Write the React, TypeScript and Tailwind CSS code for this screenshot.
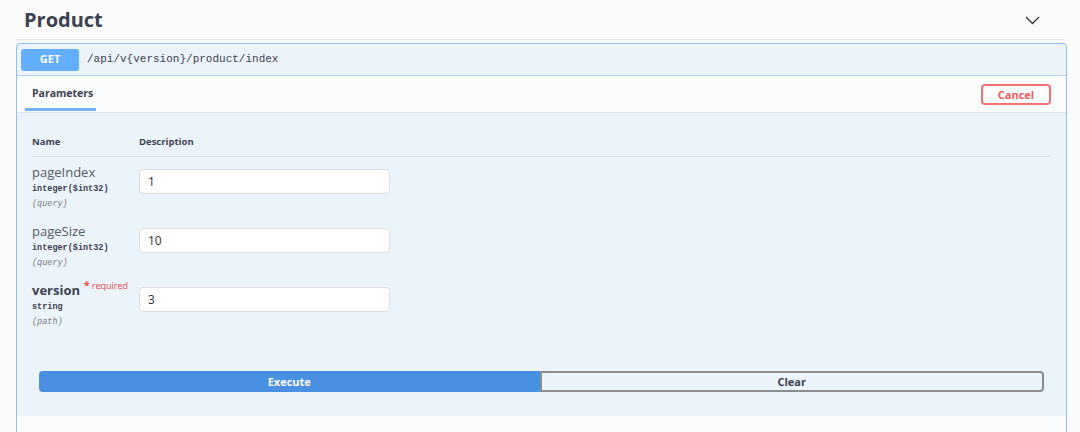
import React from "react";

/**
 * Swagger-style operation block: GET /api/v{version}/product/index, "Try it out" open.
 */

type Param = {
  name: string;
  type: string;
  where: string;
  value: string;
  required?: boolean;
};

const params: Param[] = [
  { name: "pageIndex", type: "integer($int32)", where: "(query)", value: "1" },
  { name: "pageSize", type: "integer($int32)", where: "(query)", value: "10" },
  { name: "version", type: "string", where: "(path)", value: "3", required: true },
];

const sans = "font-['Open_Sans','Noto_Sans',sans-serif]";
const mono = "font-['Liberation_Mono','DejaVu_Sans_Mono',monospace]";

export default function App() {
  return (
    <div className={`w-[1080px] h-[432px] overflow-hidden bg-[#fafafa] px-4 text-[#3b4151] ${sans}`}>
      <div className="flex items-center justify-between h-[40px] pl-2 pr-[24px] border-b border-[#e3e4e6]">
        <h2 className="text-[20px] font-bold leading-none">Product</h2>
        <svg width="15" height="9" viewBox="0 0 15 9" className="mt-[1px]">
          <path d="M1 1 L7.5 7.5 L14 1" fill="none" stroke="#3b3b3b" strokeWidth="1.4" />
        </svg>
      </div>

      <div className="mt-[3px] w-[1051px] border border-[#8dbff4] rounded-[4px] bg-[#ebf3fb] overflow-hidden">
        {/* summary */}
        <div className="flex items-center h-[32px] px-[4px] border-b border-[#b2d2f6]">
          <span className="w-[58px] h-[22px] rounded-[3px] bg-[#61affe] text-white text-[11px] font-bold flex items-center justify-center">
            GET
          </span>
          <span className={`ml-[8px] text-[11px] ${mono}`}>/api/v{"{version}"}/product/index</span>
        </div>

        {/* tab header */}
        <div className="flex items-center justify-between h-[37px] bg-[#fbfcfe] border-b border-[#dfe6ee] pl-[8px] pr-[15px]">
          <div className="relative h-full flex items-center px-[7px]">
            <span className="text-[10.5px] font-bold">Parameters</span>
            <span className="absolute left-0 w-[71px] bottom-[1px] h-[3px] bg-[#6fb3f8]" />
          </div>
          <button className="w-[70px] h-[21px] rounded-[4px] border-2 border-[#f47272] text-[#f05a5a] text-[11px] font-bold leading-none">
            Cancel
          </button>
        </div>

        {/* parameters */}
        <div className="pt-[22px] pb-[24px]">
          <div className="mx-[15px] flex border-b border-[#d6dde6] pb-[7px] text-[9.5px] font-bold leading-[14px]">
            <div className="w-[107px]">Name</div>
            <div>Description</div>
          </div>
          <div className="mt-[7px]">
            {params.map((p) => (
              <ParamRow key={p.name} p={p} />
            ))}
          </div>
          <div className="mx-[22px] mt-[30px] flex h-[21px]">
            <button className="flex-1 rounded-l-[4px] bg-[#4990e2] text-white text-[11px] font-bold leading-none">
              Execute
            </button>
            <button className="flex-1 rounded-r-[4px] border-2 border-[#8a8d91] text-[#3b4151] text-[11px] font-bold leading-none">
              Clear
            </button>
          </div>
        </div>

        {/* responses */}
        <div className="bg-[#fbfcfe] h-[40px] pl-[15px] pt-[8px]">
          <span className="text-[14px] font-bold leading-[16px]">Responses</span>
        </div>
      </div>
    </div>
  );
}

function ParamRow({ p }: { p: Param }) {
  return (
    <div className="flex h-[59px] mx-[15px]">
      <div className="w-[107px]">
        <div className="flex items-start leading-[16px]">
          <span className={p.required ? "text-[13px] font-bold" : "text-[13px] text-[#555b66]"}>{p.name}</span>
          {p.required && (
            <span className="ml-[4px] -mt-[4px] text-[9px] text-[#f04848] leading-[14px]">
              <span className="text-[10px] font-bold">*</span>&nbsp;required
            </span>
          )}
        </div>
        <div className={`mt-[3px] text-[8.5px] font-bold leading-[12px] ${mono}`}>{p.type}</div>
        <div className={`mt-[3px] text-[8.5px] italic text-[#7a7d82] leading-[12px] ${mono}`}>{p.where}</div>
      </div>
      <div className="pt-[5px]">
        <div className="w-[251px] h-[25px] bg-white border border-[#dcdfe3] rounded-[4px] flex items-center px-[8px] text-[12px] text-[#333]">
          {p.value}
        </div>
      </div>
    </div>
  );
}
